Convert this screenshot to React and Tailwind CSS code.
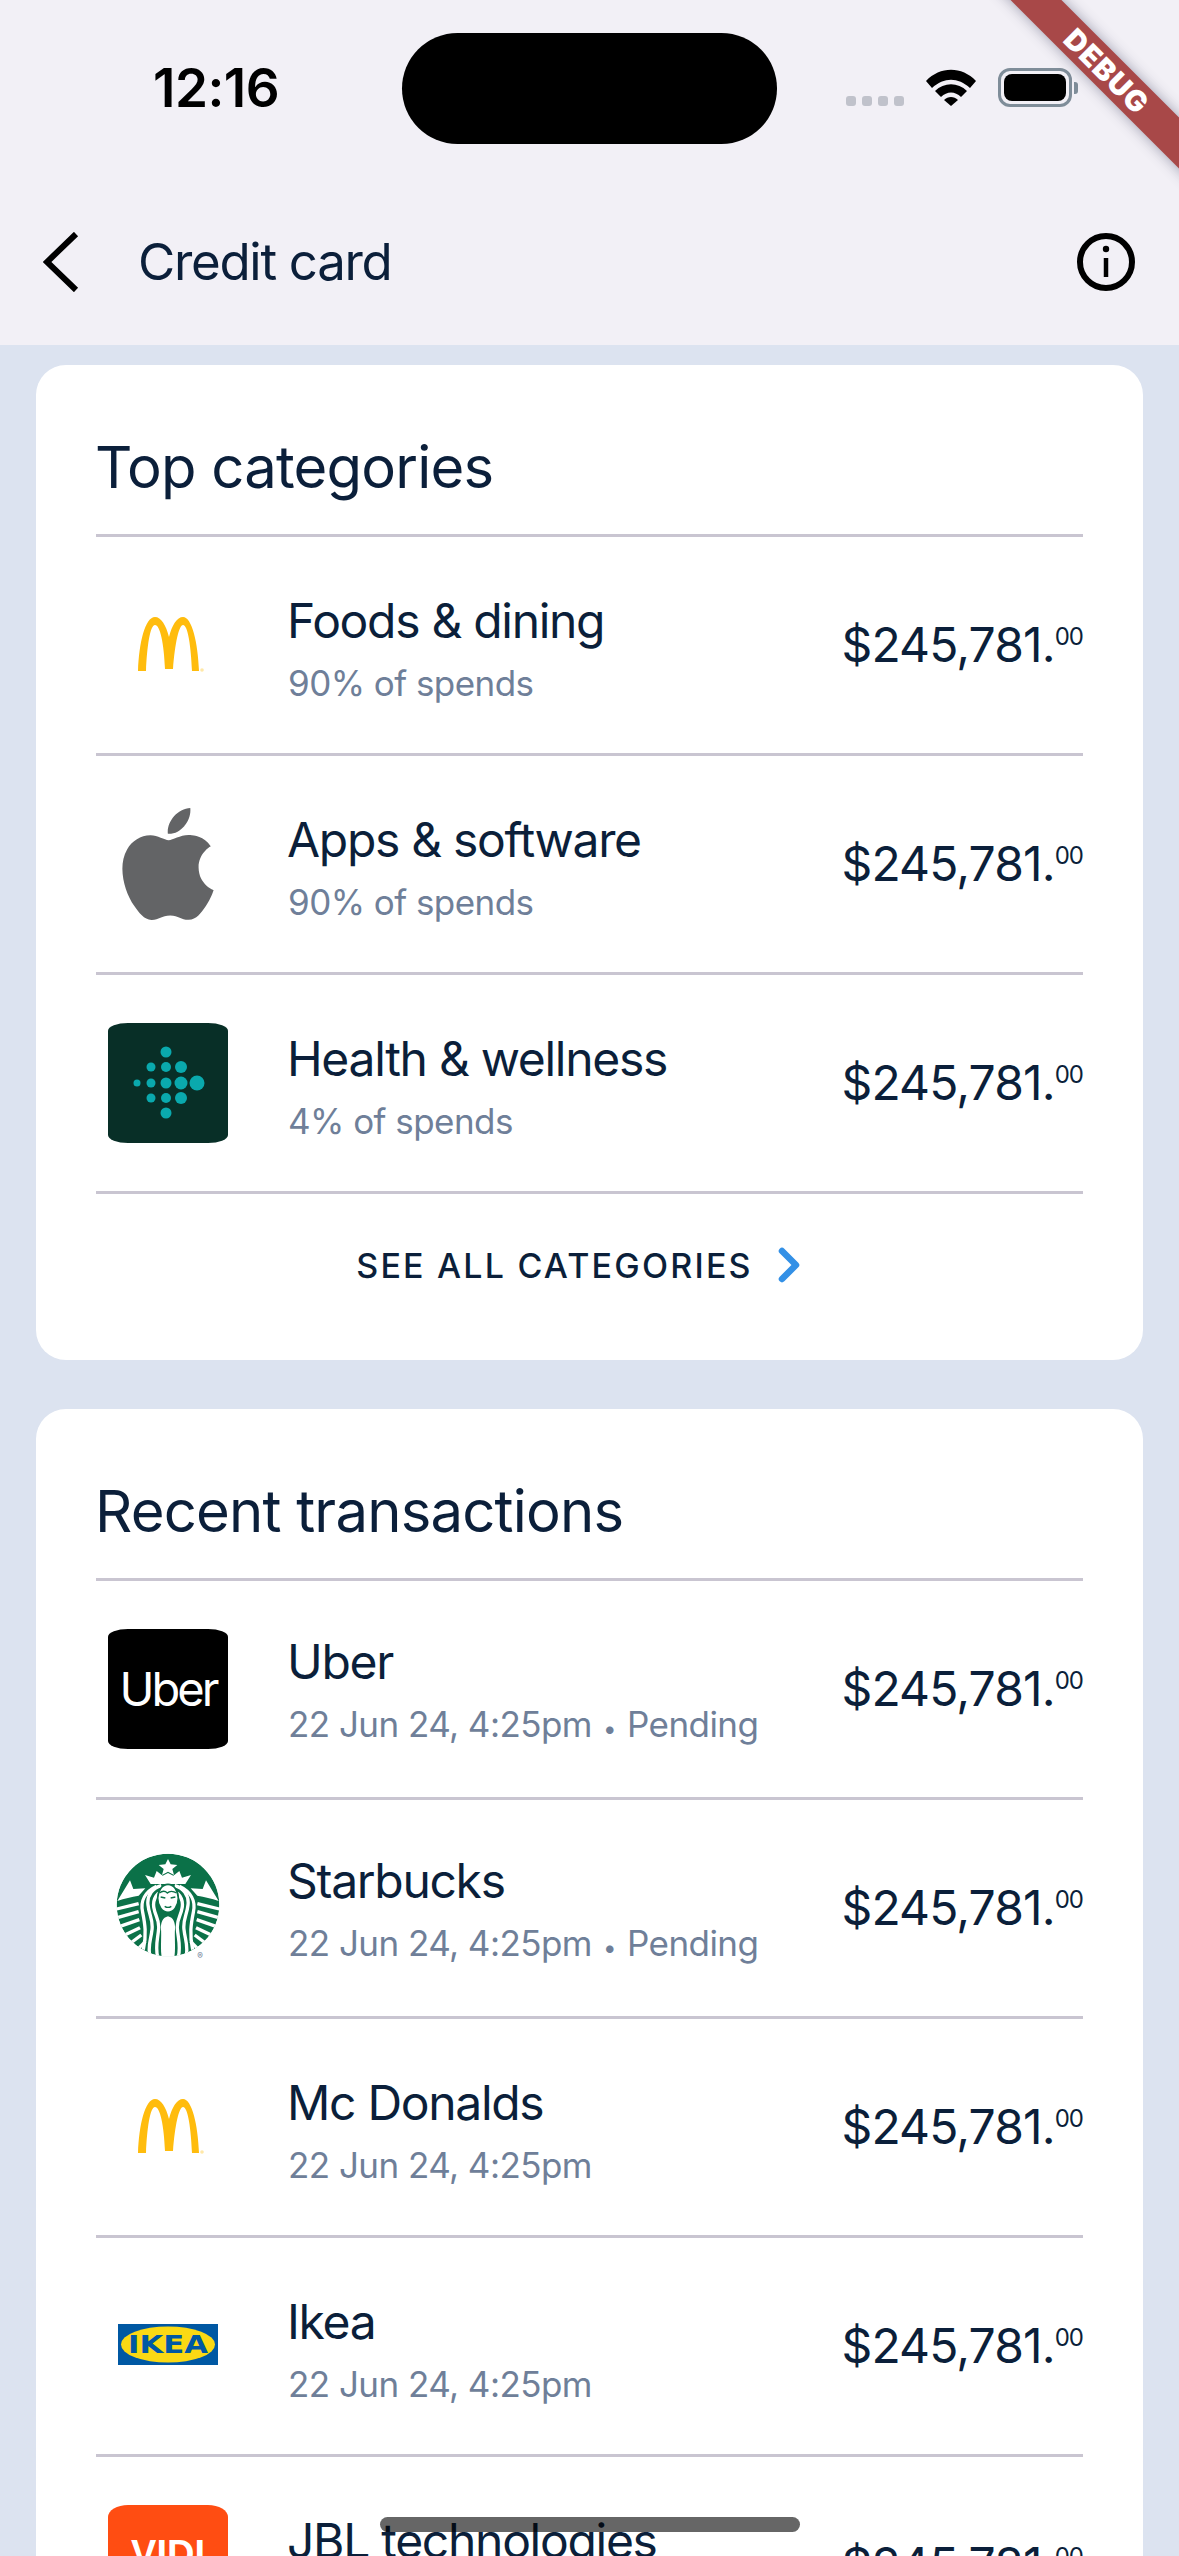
import React from 'react';
import { SiApple } from 'react-icons/si';

const McDonaldsLogo = () => (
  <svg width="120" height="120" viewBox="0 0 120 120">
    <path fill="#ffbc0d" d="M30 86C31 58 37 32 47 32C53 32 58 40 61 52C64 40 69 32 75 32C84 32 90 58 91 86H84C83 62 80 40 75 40C71 40 67 58 65 84H57C56 58 52 40 47 40C42 40 39 62 38 86Z" />
    <circle cx="94" cy="85" r="1.8" fill="#ffe8a8" />
  </svg>
);

const AppleLogo = () => (
  <div className="flex h-[120px] w-[120px] items-center justify-center">
    <SiApple size={112} color="#636466" />
  </div>
);

const fitbitDots = [
  [58, 29, 5.5], [43, 44, 4.5], [58, 44, 5], [73, 44, 6], [29, 60, 3.5], [43, 60, 4.5], [58, 60, 5.5],
  [73, 60, 6.5], [89, 60, 7.5], [43, 75, 4.5], [58, 75, 5], [73, 75, 6], [58, 90, 5.5],
];

const FitbitLogo = () => (
  <div className="h-[120px] w-[120px] rounded-[20px/8px] bg-[#082f27]">
    <svg width="120" height="120" viewBox="0 0 120 120">
      {fitbitDots.map(([x, y, r]) => (
        <circle key={`${x}-${y}`} cx={x} cy={y} r={r} fill="#0aa9ad" />
      ))}
    </svg>
  </div>
);

const UberLogo = () => (
  <div className="flex h-[120px] w-[120px] items-center justify-center rounded-[20px/8px] bg-black pb-[2px]">
    <span className="text-[47px] leading-none font-normal tracking-[-3px] text-white">Uber</span>
  </div>
);

// both halves of the siren are the same, the second one is mirrored round x=234
const SirenHalf = () => (
  <g>
    <path fill="#fff" d="M82 216L120 154L130 180L166 178L146 200C124 204 104 208 82 216Z" />
    <g stroke="#fff" strokeWidth="10" fill="none">
      <path d="M80 240L146 224" />
      <path d="M82 266L146 248" />
      <path d="M90 292L148 272" />
      <path d="M104 318L150 296" />
      <path d="M122 342L154 318" />
      <path d="M142 362L166 338" />
      <path d="M200 172C166 188 150 216 158 250C165 285 170 315 160 362" />
      <path d="M214 170C190 176 170 198 174 228C177 258 190 272 186 302C183 332 172 350 180 384" />
      <path d="M206 192C192 206 188 220 192 238C195 260 208 270 206 298C204 328 194 354 204 388" />
    </g>
  </g>
);

const StarbucksLogo = () => (
  <svg width="120" height="120" viewBox="54 57 360 360">
    <defs>
      <clipPath id="sbux">
        <circle cx="234" cy="228" r="154" />
      </clipPath>
    </defs>
    <g clipPath="url(#sbux)">
      <circle cx="234" cy="228" r="154" fill="#0b7148" />
      <path fill="#fff" d="M234 90L242 106L262 108L247 120L252 138L234 128L216 138L221 120L206 108L226 106Z" />
      <path fill="#fff" d="M165 138L192 146L200 126L218 140L234 132L250 140L268 126L276 146L303 138L286 165H182Z" />
      <SirenHalf />
      <g transform="translate(468 0) scale(-1 1)">
        <SirenHalf />
      </g>
      <path fill="#fff" d="M234 262C216 266 212 285 213 300C215 330 210 360 216 392H252C258 360 253 330 255 300C256 285 252 266 234 262Z" />
      <ellipse cx="234" cy="208" rx="31" ry="42" fill="#fff" stroke="#0b7148" strokeWidth="5" />
      <path stroke="#0b7148" strokeWidth="4" fill="none" d="M208 192C216 186 226 186 232 192C238 186 250 186 260 192M212 204L226 207M256 204L242 207M224 232C230 236 238 236 244 232" />
    </g>
    <text x="322" y="390" fontSize="25" fill="#6b7a94" fontFamily="Inter, sans-serif">®</text>
  </svg>
);

const IkeaLogo = () => (
  <svg width="120" height="120" viewBox="0 0 120 120">
    <rect x="10" y="38" width="100" height="41" fill="#0058a3" />
    <ellipse cx="60" cy="58.5" rx="47" ry="18" fill="#fbd914" />
    <text x="60" y="67" textAnchor="middle" fontSize="25" fontWeight="700" fontFamily="DejaVu Sans, sans-serif" fill="#0058a3" textLength="80" lengthAdjust="spacingAndGlyphs">IKEA</text>
  </svg>
);

const VidiLogo = () => (
  <div className="flex h-[120px] w-[120px] justify-center rounded-[20px/12px] bg-[#ff4d12] pt-[30px]">
    <span className="font-['Liberation_Sans',sans-serif] text-[38px] leading-none font-bold text-white">VIDI</span>
  </div>
);

const categories = [
  { name: 'Foods & dining', sub: '90% of spends', logo: <McDonaldsLogo /> },
  { name: 'Apps & software', sub: '90% of spends', logo: <AppleLogo /> },
  { name: 'Health & wellness', sub: '4% of spends', logo: <FitbitLogo /> },
];

const transactions = [
  { name: 'Uber', sub: '22 Jun 24, 4:25pm', pending: true, logo: <UberLogo /> },
  { name: 'Starbucks', sub: '22 Jun 24, 4:25pm', pending: true, logo: <StarbucksLogo /> },
  { name: 'Mc Donalds', sub: '22 Jun 24, 4:25pm', logo: <McDonaldsLogo /> },
  { name: 'Ikea', sub: '22 Jun 24, 4:25pm', logo: <IkeaLogo /> },
  { name: 'JBL technologies', sub: '22 Jun 24, 4:25pm', logo: <VidiLogo /> },
];

const Row = ({ item }) => (
  <div className="flex h-[219px] items-center border-t-[3px] border-[#c9c5d1] pl-3">
    <div className="h-[120px] w-[120px] shrink-0">{item.logo}</div>
    <div className="ml-[60px] flex-1 pt-[13px]">
      <p className="-ml-px text-[48px] leading-[60px] font-[430] tracking-[-1.3px] text-[#0b1f3a]">{item.name}</p>
      <p className="mt-[2px] text-[35px] leading-[60px] tracking-[-0.55px] text-[#6f7f99]">
        {item.sub}
        {item.pending && (
          <>
            <span className="mx-[11px] text-[24px]">•</span>Pending
          </>
        )}
      </p>
    </div>
    <div className="flex items-start text-[#0b1f3a]">
      <span className="text-[48px] leading-[60px] tracking-[-0.85px]">$245,781.</span>
      <span className="mt-[10px] text-[24px] leading-[24px] tracking-[-1px]">00</span>
    </div>
  </div>
);

const Card = ({ title, items, children }) => (
  <div className="mx-9 rounded-[30px] bg-white px-[60px]">
    <h2 className="-ml-px pt-[68px] pb-[33px] text-[58px] leading-[68px] font-[430] tracking-[-0.8px] text-[#0b1f3a]">{title}</h2>
    {items.map((item) => (
      <Row key={item.name} item={item} />
    ))}
    {children}
  </div>
);

const App = () => {
  return (
    <div className="relative h-[2556px] overflow-hidden bg-[#dce3f0] font-['Inter',sans-serif]">
      {/* Status bar + app bar */}
      <div className="h-[345px] bg-[#f2f0f6]">
        <div className="flex h-[176px] items-start pt-[33px] pl-[153px]">
          <span className="mt-[24px] w-[249px] text-[53px] leading-[62px] font-semibold tracking-[-0.5px] text-black">12:16</span>
          <div className="h-[111px] w-[375px] rounded-[56px] bg-black" />
          <div className="mt-[63px] ml-[69px] flex gap-[6px]">
            {[0, 1, 2, 3].map((dot) => (
              <span key={dot} className="h-[10px] w-[10px] rounded-[3px] bg-[#c0c2cb]" />
            ))}
          </div>
          <svg className="mt-[36px] ml-[22px]" width="50" height="37" viewBox="0 0 50 37">
            <path d="M0 12C14 -3 36 -3 50 12L44 19C32 8 18 8 6 19Z" />
            <path d="M9 22C18 13 32 13 41 22L35 28C29 22 21 22 15 28Z" />
            <path d="M18 31C22 27 28 27 32 31L25 37Z" />
          </svg>
          <div className="mt-[35px] ml-[22px] flex items-center">
            <div className="h-[39px] w-[74px] rounded-[12px] border-[3px] border-[#7f8d99] p-[3px]">
              <div className="h-full w-full rounded-[8px] bg-black" />
            </div>
            <span className="ml-[2px] h-[12px] w-[4px] rounded-r-[3px] bg-[#7f8d99]" />
          </div>
        </div>
        <div className="flex items-center pt-[56px] pr-[44px] pl-[43px]">
          <svg width="36" height="60" viewBox="0 0 36 60" fill="none" stroke="#000" strokeWidth="6">
            <path d="M33 2L4 30L33 58" />
          </svg>
          <span className="ml-[59px] flex-1 text-[51px] leading-[60px] font-[430] tracking-[-1.3px] text-[#0b1f3a]">Credit card</span>
          <svg width="58" height="58" viewBox="0 0 58 58" fill="none" stroke="#000">
            <circle cx="29" cy="29" r="26" strokeWidth="6" />
            <path d="M29 25V44" strokeWidth="4.5" />
            <circle cx="29" cy="16" r="3.2" fill="#000" stroke="none" />
          </svg>
        </div>
      </div>

      <div className="flex flex-col gap-[49px] pt-5">
        <Card title="Top categories" items={categories}>
          <div className="flex h-[169px] items-center justify-center border-t-[3px] border-[#c9c5d1] pr-[22px] pb-[24px]">
            <span className="text-[34px] font-medium tracking-[2.2px] text-[#0b1f3a]">SEE ALL CATEGORIES</span>
            <svg className="ml-[24px]" width="24" height="36" viewBox="0 0 24 36" fill="none" stroke="#3390e6" strokeWidth="6.5" strokeLinecap="round" strokeLinejoin="round">
              <path d="M5 4L19 18L5 32" />
            </svg>
          </div>
        </Card>
        <Card title="Recent transactions" items={transactions} />
      </div>

      {/* Flutter debug banner */}
      <div className="absolute top-[53px] left-[957px] flex h-[36px] w-[300px] rotate-45 items-center justify-center bg-[#a84848] shadow-[0_0_14px_rgba(60,60,90,0.45)]">
        <span className="text-[29px] leading-none font-black tracking-[1px] text-white">DEBUG</span>
      </div>

      {/* Home indicator */}
      <div className="absolute top-[2517px] left-[380px] h-[15px] w-[420px] rounded-full bg-black/60" />
    </div>
  );
};

export default App;
